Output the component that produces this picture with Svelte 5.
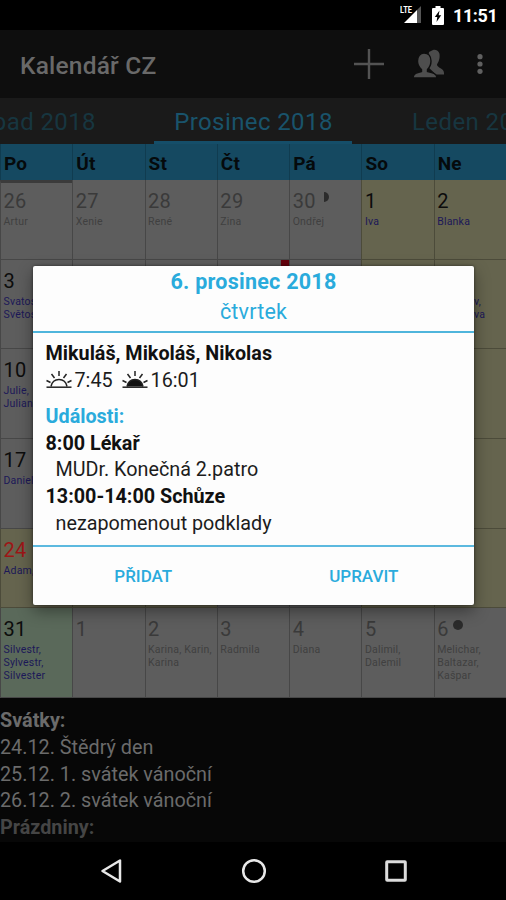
<script lang="ts">
  type Day = { n: number; names?: string[]; kind?: string; moon?: string; marked?: boolean };

  const weekdays = ['Po', 'Út', 'St', 'Čt', 'Pá', 'So', 'Ne'];

  const weeks: Day[][] = [
    [
      { n: 26, names: ['Artur'], kind: 'other' },
      { n: 27, names: ['Xenie'], kind: 'other' },
      { n: 28, names: ['René'], kind: 'other' },
      { n: 29, names: ['Zina'], kind: 'other' },
      { n: 30, names: ['Ondřej'], kind: 'other', moon: 'half' },
      { n: 1, names: ['Iva'], kind: 'weekend' },
      { n: 2, names: ['Blanka'], kind: 'weekend' }
    ],
    [
      { n: 3, names: ['Svatoslav,', 'Světoslav'] },
      { n: 4 },
      { n: 5 },
      { n: 6, marked: true },
      { n: 7 },
      { n: 8, kind: 'weekend' },
      { n: 9, names: ['Vratislav,', 'Vratislava'], kind: 'weekend' }
    ],
    [
      { n: 10, names: ['Julie,', 'Juliana'] },
      { n: 11 },
      { n: 12 },
      { n: 13 },
      { n: 14 },
      { n: 15, kind: 'weekend' },
      { n: 16, kind: 'weekend' }
    ],
    [
      { n: 17, names: ['Daniel'] },
      { n: 18 },
      { n: 19 },
      { n: 20 },
      { n: 21 },
      { n: 22, kind: 'weekend' },
      { n: 23, kind: 'weekend' }
    ],
    [
      { n: 24, names: ['Adam, Eva'], kind: 'weekend holiday' },
      { n: 25, kind: 'weekend holiday' },
      { n: 26, kind: 'weekend holiday' },
      { n: 27 },
      { n: 28 },
      { n: 29, kind: 'weekend' },
      { n: 30, kind: 'weekend' }
    ],
    [
      { n: 31, names: ['Silvestr,', 'Sylvestr,', 'Silvester'], kind: 'today' },
      { n: 1, kind: 'other' },
      { n: 2, names: ['Karina, Karin,', 'Karina'], kind: 'other' },
      { n: 3, names: ['Radmila'], kind: 'other' },
      { n: 4, names: ['Diana'], kind: 'other' },
      { n: 5, names: ['Dalimil,', 'Dalemil'], kind: 'other' },
      { n: 6, names: ['Melichar,', 'Baltazar,', 'Kašpar'], kind: 'other', moon: 'new' }
    ]
  ];

  const holidays = ['24.12. Štědrý den', '25.12. 1. svátek vánoční', '26.12. 2. svátek vánoční'];

  const sunTimes = [
    { time: '7:45', fill: 'none' },
    { time: '16:01', fill: '#111' }
  ];
</script>

<div class="screen">
  <div class="status">
    <svg width="22" height="20" viewBox="0 0 22 20">
      <path d="M21 1V18H17V5Z" fill="#555" />
      <path d="M17 5V18H4Z" fill="#fff" />
      <path d="M0 0H12V9H0Z" fill="#000" />
      <text x="0" y="8" textLength="12" lengthAdjust="spacingAndGlyphs">LTE</text>
    </svg>
    <svg class="battery" width="12" height="19" viewBox="0 0 12 19">
      <path d="M3.5 0H8.5V2H11Q12 2 12 3V18Q12 19 11 19H1Q0 19 0 18V3Q0 2 1 2H3.5Z" fill="#fff" />
      <path d="M7.5 4.5L2.8 11H5.3L4.5 16L9.2 9.2H6.7Z" fill="#000" />
    </svg>
    <span class="clock">11:51</span>
  </div>

  <div class="appbar">
    <h1>Kalendář CZ</h1>
    <svg class="plus" width="30" height="30" viewBox="0 0 30 30">
      <path d="M15 0V30M0 15H30" stroke="#535353" stroke-width="2.4" />
    </svg>
    <svg class="people" width="32" height="30" viewBox="0 0 32 30">
      <path
        d="M20 1C25 0 27.500 4 26.500 9C26 12 25 13.500 24 15.500C24 19 31 19 31 24V25.500H23L14 17L16 3Z"
        fill="#4b4b4b"
      />
      <path
        d="M11 4C15.500 4 18 7.500 18 12C18 16 16.500 18.500 14.500 20.500V22.500C19 23.500 24 24.500 24 29H0C0 24.500 4 23.500 8.500 22.500V20.500C6 18.500 4.500 16 4.500 12C4.500 7.500 7 4 11 4Z"
        fill="#4e4e4e"
        stroke="#0e0e0e"
        stroke-width="1.4"
      />
    </svg>
    <svg class="more" width="6" height="20" viewBox="0 0 6 20">
      <g fill="#606060">
        <circle cx="3" cy="2.700" r="2.600" />
        <circle cx="3" cy="10" r="2.600" />
        <circle cx="3" cy="17.300" r="2.600" />
      </g>
    </svg>
  </div>

  <div class="tabs">
    <span class="tab prev">Listopad 2018</span>
    <span class="tab active">Prosinec 2018</span>
    <span class="tab next">Leden 2019</span>
  </div>

  <div class="weekdays">
    {#each weekdays as day}
      <span>{day}</span>
    {/each}
  </div>

  <div class="month">
    {#each weeks as week, w}
      {#each week as day, d}
        <div class="day {day.kind ?? ''}" class:selected={w === 0 && d === 0}>
          <div class="number">
            {day.n}
            {#if day.moon}<i class="moon {day.moon}"></i>{/if}
          </div>
          {#each day.names ?? [] as name}
            <div class="name">{name}</div>
          {/each}
          {#if day.marked}<i class="mark"></i>{/if}
        </div>
      {/each}
    {/each}
  </div>

  <div class="info">
    <b>Svátky:</b>
    {#each holidays as holiday}
      <span>{holiday}</span>
    {/each}
    <b class="faded">Prázdniny:</b>
  </div>

  <div class="navbar">
    <svg width="22" height="26" viewBox="0 0 22 26">
      <path d="M20 2.500V23.500L2.500 13Z" fill="none" stroke="#e8e8e8" stroke-width="2.500" stroke-linejoin="round" />
    </svg>
    <svg width="26" height="26" viewBox="0 0 26 26">
      <circle cx="13" cy="13" r="10.800" fill="none" stroke="#e8e8e8" stroke-width="2.500" />
    </svg>
    <svg width="22" height="22" viewBox="0 0 22 22">
      <rect x="1.700" y="1.700" width="18.600" height="18.600" rx="0.500" fill="none" stroke="#dcdcdc" stroke-width="3" />
    </svg>
  </div>

  <div class="dialog" role="dialog">
    <header>
      <div class="date">6. prosinec 2018</div>
      <div class="weekday">čtvrtek</div>
    </header>
    <div class="body">
      <div class="line bold">Mikuláš, Mikoláš, Nikolas</div>
      <div class="line sun">
        {#each sunTimes as sun}
          <svg width="26" height="18" viewBox="0 0 26 18">
            <path d="M0.500 16.200H25.500" stroke="#222" stroke-width="1.500" />
            <path d="M5 15.500C6 10.500 9 8.500 13 8.500S20 10.500 21 15.500" fill={sun.fill} stroke="#222" stroke-width="1.500" />
            <path d="M13 0V5M5.500 3L8.500 7M20.500 3L17.500 7M0.500 9.500L4.500 11.500M25.500 9.500L21.500 11.500" stroke="#222" stroke-width="1.500" />
          </svg>
          <span>{sun.time}</span>
        {/each}
      </div>
      <div class="line heading">Události:</div>
      <div class="line bold">8:00 Lékař</div>
      <div class="line note">MUDr. Konečná 2.patro</div>
      <div class="line bold">13:00-14:00 Schůze</div>
      <div class="line note">nezapomenout podklady</div>
    </div>
    <footer>
      <button>PŘIDAT</button>
      <button>UPRAVIT</button>
    </footer>
  </div>
</div>

<style>
  :global(body) {
    background: #000;
  }

  .screen {
    position: relative;
    width: 506px;
    height: 900px;
    overflow: hidden;
    background: #000;
    font-family: Roboto, 'Liberation Sans', sans-serif;
  }

  .status {
    box-sizing: border-box;
    height: 30px;
    padding-right: 10px;
    display: flex;
    align-items: center;
    justify-content: flex-end;
    color: #fff;
  }

  .status text {
    font-size: 9px;
    font-weight: 700;
    fill: #fff;
  }

  .battery {
    margin-left: 10px;
  }

  .clock {
    width: 43px;
    margin-left: 9px;
    font-size: 18px;
    font-weight: 700;
    line-height: 30px;
    letter-spacing: -0.4px;
    white-space: nowrap;
    padding-top: 2px;
  }

  .appbar {
    box-sizing: border-box;
    height: 68px;
    padding: 0 23px 0 20px;
    display: flex;
    align-items: center;
    background: #0e0e0e;
  }

  h1 {
    flex: 1;
    margin: 3px 0 0;
    color: #696969;
    font-size: 24.5px;
    font-weight: 500;
    line-height: 30px;
    letter-spacing: 0.2px;
  }

  .people {
    margin-left: 29px;
  }

  .more {
    margin-left: 32px;
  }

  .tabs {
    height: 46px;
    display: grid;
    grid-template-columns: 154px 198px 154px;
    overflow: hidden;
    background: #1a1a1a;
  }

  .tab {
    box-sizing: border-box;
    color: #173640;
    font-size: 24px;
    line-height: 48px;
    letter-spacing: 0.4px;
    white-space: nowrap;
  }

  .prev {
    justify-self: end;
    padding-right: 58px;
  }

  .active {
    height: 46px;
    padding-left: 1px;
    color: #19536b;
    text-align: center;
    border-bottom: 3px solid #154e69;
  }

  .next {
    padding-left: 60px;
  }

  .weekdays {
    height: 36px;
    display: grid;
    grid-template-columns: repeat(7, 1fr);
    background: #154961;
    color: #050a0c;
    font-size: 19px;
    font-weight: 700;
    line-height: 39px;
  }

  .weekdays span {
    padding-left: 3px;
    border-left: 1px solid #103c50;
    letter-spacing: 0.2px;
  }

  .month {
    display: grid;
    grid-template-columns: repeat(7, 1fr);
    grid-template-rows: 80px 89px 90px 90px 79px 90px;
  }

  .day {
    position: relative;
    min-width: 0;
    padding: 8px 0 0 2.5px;
    border-left: 1px solid #474747;
    border-bottom: 1px solid #474747;
    background: #5d5d5d;
    overflow: hidden;
  }

  .weekend {
    background: #65644e;
    border-color: #4c4b3a;
  }

  .today {
    background: #5a695a;
  }

  .selected {
    border-top: 3px solid #3b3b3b;
    padding-top: 5px;
  }

  .number {
    display: flex;
    height: 27px;
    color: #0c0c0c;
    font-size: 20px;
    line-height: 26px;
    letter-spacing: 0.3px;
  }

  .other .number {
    color: #3a3a3a;
  }

  .holiday .number {
    color: #9e1616;
  }

  .name {
    color: #1c1858;
    font-size: 10.5px;
    line-height: 13px;
    letter-spacing: 0.2px;
    white-space: nowrap;
  }

  .other .name {
    color: #404040;
  }

  .moon {
    width: 10px;
    height: 10px;
    margin: 4px 0 0 4px;
    border-radius: 50%;
    background: #2b2b2b;
  }

  .half {
    width: 5px;
    margin-left: 8px;
    border-radius: 0 5px 5px 0;
  }

  .mark {
    position: absolute;
    top: -1px;
    right: 0;
    width: 8px;
    height: 10px;
    background: #65000c;
  }

  .info {
    box-sizing: border-box;
    height: 144px;
    padding: 10px 0 0 0;
    display: flex;
    flex-direction: column;
    overflow: hidden;
    background: #070707;
    color: #6b6b6b;
    font-size: 19.8px;
    line-height: 26.8px;
  }

  .info b {
    font-weight: 700;
  }

  .info .faded {
    color: #454545;
  }

  .navbar {
    box-sizing: border-box;
    height: 58px;
    padding: 0 99px 0 100px;
    display: flex;
    align-items: center;
    justify-content: space-between;
  }

  .dialog {
    position: absolute;
    top: 266px;
    left: 33px;
    width: 441px;
    height: 339px;
    border-radius: 2px;
    background: #fdfdfd;
    box-shadow: 0 6px 16px rgba(0, 0, 0, 0.4), 0 0 3px rgba(0, 0, 0, 0.5);
    color: #1c1c1c;
  }

  header {
    box-sizing: border-box;
    height: 67px;
    padding-top: 1px;
    border-bottom: 2px solid #4fb5dc;
    color: #2aabdc;
    text-align: center;
  }

  .date {
    font-size: 21.5px;
    font-weight: 700;
    line-height: 30px;
    letter-spacing: 0.25px;
  }

  .weekday {
    font-size: 21.5px;
    line-height: 29px;
    letter-spacing: 0.2px;
  }

  .body {
    box-sizing: border-box;
    height: 212px;
    padding: 8px 13px 0 12.5px;
  }

  .line {
    height: 26.8px;
    font-size: 19.75px;
    line-height: 26.8px;
    white-space: pre;
  }

  .bold {
    font-weight: 700;
    color: #111;
  }

  .sun {
    display: flex;
    align-items: center;
    height: 28px;
    margin-bottom: 8px;
  }

  .sun svg {
    margin-top: -3px;
  }

  .sun span {
    margin: 0 9px 0 3px;
  }

  .heading {
    color: #2aabdc;
    font-weight: 700;
  }

  .note {
    padding-left: 10px;
  }

  footer {
    box-sizing: border-box;
    height: 60px;
    display: grid;
    grid-template-columns: 1fr 1fr;
    border-top: 2px solid #5cb9df;
  }

  button {
    padding: 0;
    border: 0;
    background: none;
    color: #2aabdc;
    font-family: inherit;
    font-size: 17px;
    font-weight: 500;
  }
</style>
